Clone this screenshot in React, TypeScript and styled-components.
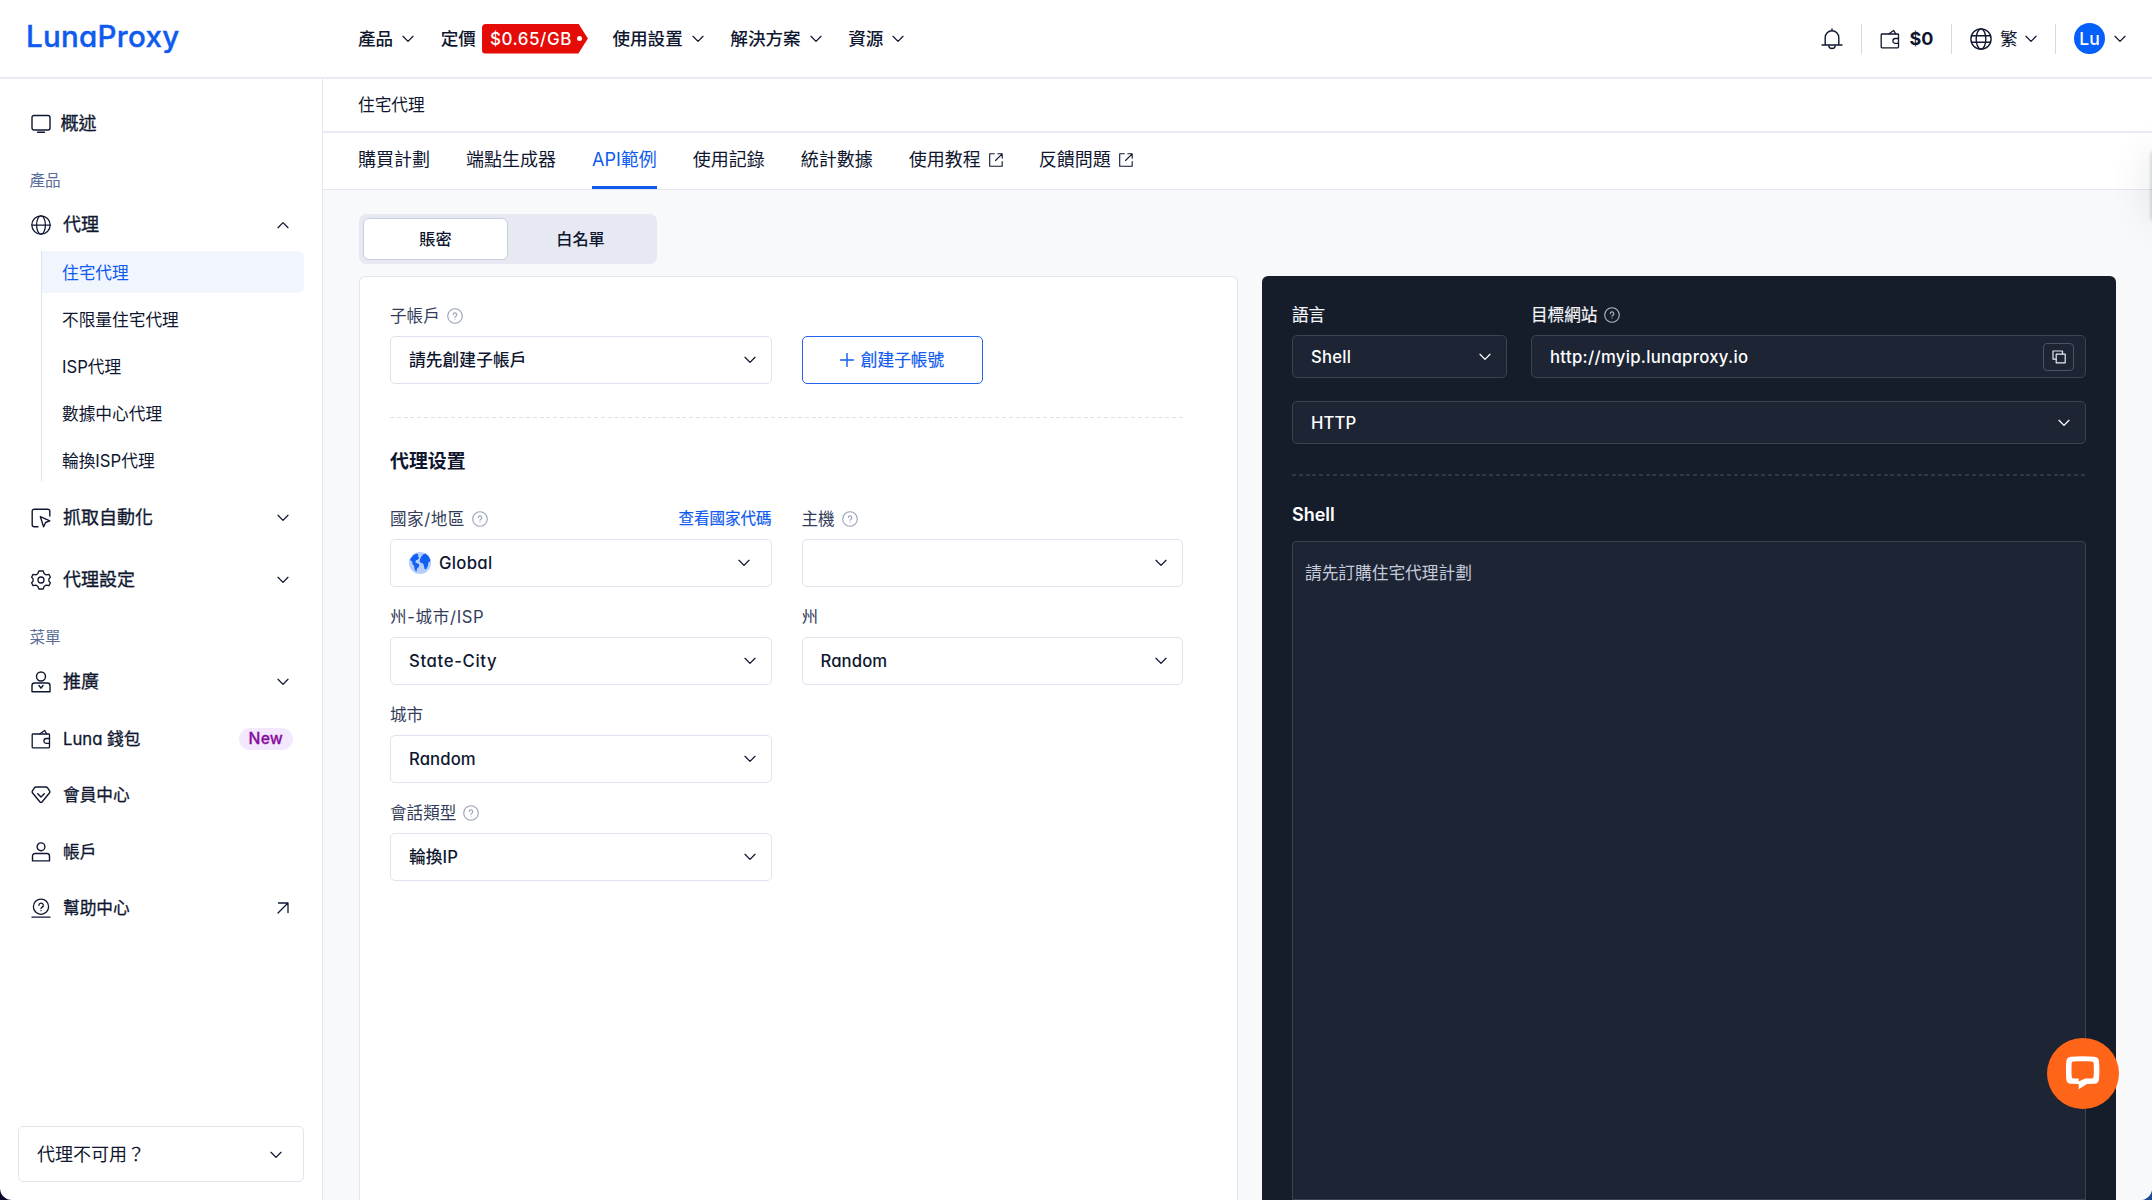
import { ReactNode } from "react";
import styled, { createGlobalStyle, css } from "styled-components";

const GlobalStyle = createGlobalStyle`
  * {
    box-sizing: border-box;
  }

  body {
    margin: 0;
    background: linear-gradient(90deg, #0a0a28 0%, #0a0a28 50%, #1c4a94 50%, #1c4a94 100%);
    color: #0f1730;
    font-family: Inter, "Noto Sans CJK TC", sans-serif;
    font-feature-settings: "cv11";
    font-size: 16.7px;
    line-height: 24px;
    overflow: hidden;
  }

  svg {
    display: block;
    flex: none;
  }
`;

const blue = "#0f5bf0";
const line = "#e9ebf3";

/* Icons */

interface IconProps {
  w?: number;
  h?: number;
  box: string;
  stroke?: number;
  children: ReactNode;
}

const Icon = ({ w = 20, h, box, stroke = 1.4, children }: IconProps) => (
  <svg
    width={w}
    height={h ?? w}
    viewBox={box}
    fill="none"
    stroke="currentColor"
    strokeWidth={stroke}
    strokeLinecap="round"
    strokeLinejoin="round"
  >
    {children}
  </svg>
);

const Chevron = ({ up = false }: { up?: boolean }) => (
  <Icon w={12} h={8} box="0 0 12 8" stroke={1.25}>
    <path d={up ? "M1 6.7 6 1.6l5 5.1" : "M1 1.3 6 6.4l5-5.1"} />
  </Icon>
);

const MonitorIcon = () => (
  <Icon box="0 0 20 20">
    <rect x="1" y="1.5" width="18" height="14.500" rx="2" />
    <path d="M6.5 18.300h7" />
  </Icon>
);

const GlobeIcon = ({ size = 20 }: { size?: number }) => (
  <Icon w={size} box="0 0 20 20" stroke={1.25}>
    <circle cx="10" cy="10" r="9.2" />
    <ellipse cx="10" cy="10" rx="4.4" ry="9.2" />
    <path d={size > 20 ? "M1.4 7h17.2M1.4 13h17.2" : "M.8 10h18.4"} />
  </Icon>
);

const CursorIcon = () => (
  <Icon box="0 0 20 20">
    <path d="M18.8 8V3.2A2 2 0 0 0 16.8 1.2H3.2A2 2 0 0 0 1.2 3.2v13.6a2 2 0 0 0 2 2H7" />
    <path d="m9.3 8.6 9.5 4.2-4.2 1.7-2 4.3z" />
  </Icon>
);

const GearIcon = () => (
  <Icon box="0 0 20 20" stroke={1.3}>
    <path d="M7.8 1h4.4l1 2.7 2.1 1.2 2.7-.5 1.4 2.8-1.5 1.8v2l1.5 1.8-1.4 2.8-2.7-.5-2.1 1.2-1 2.7H7.8l-1-2.7-2.1-1.2-2.7.5L.6 12.8 2.1 11V9L.6 7.2 2 4.4l2.7.5 2.1-1.2z" />
    <circle cx="10" cy="10" r="3" />
  </Icon>
);

const PromoteIcon = () => (
  <Icon h={22} box="0 0 20 22">
    <circle cx="10" cy="5.5" r="4.5" />
    <path d="M1 20.7v-6.2a2.5 2.5 0 0 1 2.5-2.5h13a2.5 2.5 0 0 1 2.5 2.5v6.2zM8 14.5l2 2.7 2-2.7" />
  </Icon>
);

const WalletIcon = () => (
  <Icon box="0 0 20 20" stroke={1.3}>
    <rect x="1.2" y="5" width="17.3" height="13.8" rx=".8" />
    <path d="m9 4.8 4.7-3.3 2 3.3M18.5 9.500h-3.200a2.400 2.400 0 0 0 0 4.800h3.200" />
  </Icon>
);

const DiamondIcon = () => (
  <Icon box="0 0 20 20">
    <path d="M5 2h10a2 2 0 0 1 1.6.8l2.1 3.4a1.5 1.5 0 0 1-.1 1.6l-7.800 9.400a1 1 0 0 1-1.600 0L1.400 7.800a1.500 1.500 0 0 1-.1-1.600l2.100-3.400A2 2 0 0 1 5 2zM6.700 8.800l3.300 3.200 3.300-3.200" />
  </Icon>
);

const UserIcon = () => (
  <Icon box="0 0 20 20">
    <circle cx="10" cy="4.8" r="3.9" />
    <path d="M1.5 18.9v-4.900a2.500 2.500 0 0 1 2.500-2.500h12a2.500 2.500 0 0 1 2.500 2.500v4.900z" />
  </Icon>
);

const HelpIcon = () => (
  <Icon box="0 0 20 20" stroke={1.3}>
    <circle cx="10" cy="8.7" r="7.6" />
    <path d="M1 19.200h18M7.900 7.300a2.200 2.200 0 1 1 3.100 2c-.7.400-1 .7-1 1.300M10 12.600v.1" />
  </Icon>
);

const ArrowIcon = () => (
  <Icon w={12} box="0 0 12 12" stroke={1.3}>
    <path d="M1 11 11 1M1.500 1H11v9.500" />
  </Icon>
);

const ExternalIcon = () => (
  <Icon w={14} box="0 0 14 14" stroke={1.1}>
    <path d="M5.3.8H.7v12.500h12.500V8.500M6.500 7.500 13.200.8M8.800.8h4.400v4.400" />
  </Icon>
);

const BellIcon = () => (
  <Icon w={22} box="0 0 22 22">
    <path d="M4.200 16.800V9.500a6.800 6.800 0 0 1 13.600 0v7.300M1 17h20M11 2.500V1M7.800 17.300a3.200 3.200 0 0 0 6.400 0" />
  </Icon>
);

const Question = () => (
  <Icon w={16} box="0 0 16 16" stroke={1.1}>
    <circle cx="8" cy="8" r="7.3" />
    <path d="M6.300 6.600a1.750 1.750 0 1 1 2.500 1.600c-.6.300-.8.600-.8 1.100M8 11v.1" />
  </Icon>
);

const CopyIcon = () => (
  <Icon w={14} box="0 0 14 14" stroke={1.2}>
    <rect x="4.2" y="4.2" width="9" height="8.6" />
    <path d="M3.800 9.200H1V1h9.500v2.900" />
  </Icon>
);

const EarthIcon = () => (
  <svg width="22" height="22" viewBox="0 0 22 22">
    <circle cx="11" cy="11" r="11" fill="#b5cdfc" />
    <path
      d="M1 7.500 4.500 3l3.700-1.400 1.300 1.300-1 1.600 1.800.7-1.300 2.300-2 .7-.8 2 1.800 1 2.400 1.300-.7 2.500-1.700 1.600-.6 3.400-1.700-2.400-.5-3.500-1.700-2-.2-2.300L1.700 8.500zM12 5l2-2.600 2.500-.8 3.300 3 1.600 3.400-.6 1.800-1.600.6-.2 3.400-1.700 3.300-1.600.2-.9-4-1-2-2.400-.5-.8-2.400z"
      fill="#1160f3"
    />
  </svg>
);

const ChatIcon = () => (
  <svg width="34" height="34" viewBox="0 0 34 34">
    <path
      d="M5 .7C12 0 21 0 28.300.7A5 5 0 0 1 33 5.300c.5 6 .5 12 0 17.700a5 5 0 0 1-4.700 4.800l-7.300.3-8.300 5.200v-5.200L5 27.800A5 5 0 0 1 .300 23c-.5-6-.5-12 0-17.700A5 5 0 0 1 5 .7z M7.300 5.500A1.700 1.700 0 0 0 5.700 7c-.3 4.500-.3 9 0 13.800a1.700 1.700 0 0 0 1.600 1.600l5.400.2v2.800l6.300-2.800 7-.2a1.700 1.700 0 0 0 1.600-1.600c.3-4.800.3-9.300 0-13.800a1.700 1.700 0 0 0-1.600-1.500c-6.200-.4-12.500-.4-18.700 0z"
      fill="#fff"
      fillRule="evenodd"
    />
  </svg>
);

/* Frame */

const Page = styled.div`
  position: relative;
  display: flex;
  flex-direction: column;
  width: 2152px;
  height: 1200px;
  overflow: hidden;
  background: #fff;
  border-radius: 0 0 12px 12px;
`;

const Header = styled.header`
  display: flex;
  align-items: center;
  height: 79px;
  padding: 0 26px;
  border-bottom: 2px solid ${line};
`;

const Logo = styled.div`
  width: 332px;
  padding-bottom: 6px;
  color: ${blue};
  font-size: 29.5px;
  font-weight: 500;
  letter-spacing: 0.3px;
  -webkit-text-stroke: 0.4px ${blue};
`;

const Nav = styled.nav`
  display: flex;
  flex: 1;
  gap: 26.5px;
  font-size: 17.6px;
  font-weight: 500;
`;

const NavItem = styled.div<{ $gap?: number }>`
  display: flex;
  align-items: center;
  gap: ${({ $gap }) => $gap ?? 9}px;
`;

const PriceTag = styled.span`
  display: flex;
  align-items: center;
  gap: 5px;
  width: 106px;
  height: 30px;
  padding-left: 8px;
  margin-right: -2px;
  color: #fff;
  background: #e50b07;
  border-radius: 4px;
  clip-path: polygon(0 0, 91% 0, 100% 50%, 91% 100%, 0 100%);
  font-size: 17px;
  letter-spacing: 0.55px;

  &::after {
    content: "";
    width: 5px;
    height: 5px;
    border-radius: 50%;
    background: #fff;
  }
`;

const HeaderTools = styled.div`
  display: flex;
  align-items: center;
`;

const Tool = styled.div<{ $gap?: number }>`
  display: flex;
  align-items: center;
  gap: ${({ $gap }) => $gap ?? 9}px;
  padding: 0 18px;
  height: 30px;
  font-size: 17.6px;

  & + & {
    border-left: 1px solid #d5d9e3;
  }

  &:last-child {
    padding-right: 0;
  }
`;

const Balance = styled.b`
  font-size: 18px;
  font-weight: 700;
`;

const Avatar = styled.span`
  width: 31px;
  height: 31px;
  color: #fff;
  background: #0560fb;
  border-radius: 50%;
  font-size: 17.5px;
  font-weight: 500;
  line-height: 31px;
  text-align: center;
`;

const Body = styled.div`
  display: flex;
  flex: 1;
  min-height: 0;
`;

/* Sidebar */

const Sidebar = styled.aside`
  display: flex;
  flex-direction: column;
  width: 323px;
  padding: 24px 18px 18px 30.5px;
  border-right: 1px solid #e3e6ee;
`;

const Caption = styled.div<{ $top: number }>`
  height: 24px;
  margin: ${({ $top }) => $top}px 0 0 -1px;
  color: #5a6d98;
  font-size: 15.6px;
`;

const MenuItem = styled.div<{ $height: number; $small?: boolean; $gap?: number; $top?: number }>`
  display: flex;
  align-items: center;
  gap: ${({ $gap }) => $gap ?? 12.5}px;
  height: ${({ $height }) => $height}px;
  padding: ${({ $top }) => $top ?? 0}px 15px 0 0;
  font-size: ${({ $small }) => ($small ? 16.7 : 18)}px;
  -webkit-text-stroke: 0.3px currentColor;
`;

const MenuText = styled.span`
  flex: 1;
`;

const NewPill = styled.span`
  padding: 0 10px;
  margin-right: -4px;
  height: 22px;
  line-height: 22px;
  color: #8a0f9e;
  background: #f3e8fd;
  border-radius: 11px;
  font-size: 15.7px;
  font-weight: 500;
  letter-spacing: 0.2px;
`;

const SubMenu = styled.div`
  display: flex;
  flex-direction: column;
  gap: 5px;
  width: 263px;
  margin: 0 0 5px 10.5px;
  border-left: 1px solid #dfe3ec;
`;

const SubItem = styled.div<{ $active?: boolean }>`
  height: 42px;
  padding-left: 20px;
  border-radius: 0 6px 6px 0;
  line-height: 44px;
  ${({ $active }) =>
    $active &&
    css`
      color: ${blue};
      background: #f1f5fe;
    `}
`;

const HelpBox = styled.div`
  display: flex;
  align-items: center;
  justify-content: space-between;
  width: 286px;
  height: 56px;
  margin: auto 0 0 -12.5px;
  padding: 1px 21px 0 18px;
  border: 1px solid #e1e4ed;
  border-radius: 5px;
  font-size: 18px;
`;

/* Content */

const Main = styled.main`
  display: flex;
  flex: 1;
  flex-direction: column;
  min-width: 0;
  background: #f8f9fb;
`;

const Crumb = styled.div`
  height: 54px;
  padding-left: 35px;
  background: #fff;
  border-bottom: 2px solid ${line};
  line-height: 53px;
`;

const Tabs = styled.div`
  display: flex;
  gap: 36px;
  height: 57px;
  padding-left: 35px;
  background: #fff;
  border-bottom: 1px solid #e3e6ee;
  font-size: 18px;
`;

const Tab = styled.div<{ $active?: boolean }>`
  display: flex;
  align-items: center;
  gap: 8px;
  height: 56px;
  padding-top: 1px;
  border-bottom: 3px solid transparent;
  ${({ $active }) =>
    $active &&
    css`
      color: ${blue};
      border-color: ${blue};
    `}
`;

const Segmented = styled.div`
  display: flex;
  width: 298px;
  height: 50px;
  margin: 24px 0 12px 36px;
  padding: 4px;
  background: #e6e9f2;
  border-radius: 7px;
`;

const Segment = styled.div<{ $active?: boolean }>`
  flex: 1;
  border: 1px solid transparent;
  border-radius: 6px;
  font-size: 16.2px;
  font-weight: 500;
  line-height: 40px;
  text-align: center;
  ${({ $active }) =>
    $active &&
    css`
      background: #fff;
      border-color: #c6cee0;
    `}
`;

const Panels = styled.div`
  display: flex;
  flex: 1;
  gap: 24px;
  min-height: 0;
  padding: 0 36px;
`;

const SettingsCard = styled.section`
  width: 879px;
  padding: 27px 54px 0 30px;
  background: #fff;
  border: 1px solid #e3e6ef;
  border-bottom: 0;
  border-radius: 6px 6px 0 0;
`;

const Columns = styled.div<{ $gap?: number }>`
  display: grid;
  grid-template-columns: repeat(2, 1fr);
  gap: ${({ $gap }) => $gap ?? 0}px 30px;
`;

const Field = styled.div`
  display: flex;
  flex-direction: column;
  gap: 8px;
`;

const Label = styled.label<{ $dark?: boolean; $tracking?: number }>`
  display: flex;
  align-items: center;
  gap: 7px;
  height: 24px;
  color: ${({ $dark }) => ($dark ? "#f3f5f9" : "#333d5a")};
  font-size: 16.6px;
  letter-spacing: ${({ $tracking }) => $tracking ?? 0}px;
  ${({ $dark }) => $dark && "-webkit-text-stroke: 0.2px currentColor;"}

  svg {
    color: ${({ $dark }) => ($dark ? "#b4bac6" : "#98a1b6")};
  }
`;

const CodeLink = styled.a`
  margin-left: auto;
  color: ${blue};
  font-size: 15.5px;
  letter-spacing: 0;
  -webkit-text-stroke: 0.2px currentColor;
`;

const SelectBox = styled.div<{ $dark?: boolean; $pull?: number; $tracking?: number }>`
  display: flex;
  align-items: center;
  gap: 8px;
  height: ${({ $dark }) => ($dark ? 43 : 48)}px;
  padding: 0 ${({ $pull }) => $pull ?? 15}px 0 18px;
  color: ${({ $dark }) => ($dark ? "#fff" : "#0f1730")};
  background: ${({ $dark }) => ($dark ? "#1d2534" : "#fff")};
  border: 1px solid ${({ $dark }) => ($dark ? "#3a4352" : "#e0e3ed")};
  border-radius: 5px;
  font-weight: 500;
  letter-spacing: ${({ $tracking }) => $tracking ?? 0.1}px;

  > :last-child {
    margin-left: auto;
  }
`;

const CreateButton = styled.button`
  display: flex;
  align-items: center;
  justify-content: center;
  align-self: end;
  gap: 7px;
  width: 181px;
  height: 48px;
  color: ${blue};
  background: #fff;
  border: 1.5px solid #2464e8;
  border-radius: 5px;
  font: inherit;
  font-feature-settings: inherit;
  -webkit-text-stroke: 0.2px currentColor;
`;

const Divider = styled.hr<{ $dark?: boolean }>`
  width: 100%;
  height: ${({ $dark }) => ($dark ? 2 : 1)}px;
  margin: ${({ $dark }) => ($dark ? 30 : 33)}px 0 0;
  border: 0;
  background: repeating-linear-gradient(
    90deg,
    ${({ $dark }) => ($dark ? "#2f3848" : "#dfe2ea")} 0 4px,
    transparent 4px 6.8px
  );
`;

const SectionTitle = styled.h3<{ $top: number; $bottom: number; $size: number }>`
  margin: ${({ $top, $bottom }) => `${$top}px 0 ${$bottom}px`};
  font-size: ${({ $size }) => $size}px;
  font-weight: 600;
  line-height: 26px;
`;

const CodePanel = styled.section`
  display: flex;
  flex: 1;
  flex-direction: column;
  padding: 27px 30px 0;
  color: #fff;
  background: #151d2b;
  border-radius: 6px 6px 0 0;
`;

const TargetRow = styled.div`
  display: grid;
  grid-template-columns: 215px 1fr;
  gap: 24px;
  margin-bottom: 23px;
`;

const CopyButton = styled.span`
  display: flex;
  align-items: center;
  justify-content: center;
  width: 31px;
  height: 28px;
  color: #e8ebf1;
  border: 1px solid #4a5362;
  border-radius: 4px;
`;

const CodeArea = styled.div`
  flex: 1;
  padding: 19px 12px;
  color: #c5cbdb;
  background: #1d2534;
  border: 1px solid #3a4352;
  border-radius: 4px 4px 0 0;
`;

/* Overlays */

const ChatButton = styled.div`
  position: absolute;
  left: 2047px;
  top: 1037.5px;
  display: flex;
  align-items: center;
  justify-content: center;
  width: 71.5px;
  height: 71.5px;
  background: #ff6519;
  border-radius: 50%;
`;

const EdgeDrawer = styled.div`
  position: absolute;
  right: -20px;
  top: 152px;
  width: 20px;
  height: 68px;
  box-shadow: 0 0 40px rgba(20, 25, 40, 0.14), 0 0 4px rgba(20, 25, 40, 0.3);
`;

const subItems = ["住宅代理", "不限量住宅代理", "ISP代理", "數據中心代理", "輪換ISP代理"];

const tabs = [
  { text: "購買計劃" },
  { text: "端點生成器" },
  { text: "API範例", active: true },
  { text: "使用記錄" },
  { text: "統計數據" },
  { text: "使用教程", external: true },
  { text: "反饋問題", external: true },
];

interface SelectFieldProps {
  label: string;
  value?: ReactNode;
  help?: boolean;
  link?: string;
  pull?: number;
  tracking?: number;
}

const SelectField = ({ label, value, help, link, pull, tracking }: SelectFieldProps) => (
  <Field>
    <Label $tracking={tracking}>
      {label}
      {help && <Question />}
      {link && <CodeLink>{link}</CodeLink>}
    </Label>
    <SelectBox $pull={pull} $tracking={link ? 0.3 : tracking}>
      {value}
      <Chevron />
    </SelectBox>
  </Field>
);

const TopBar = () => (
  <Header>
    <Logo>LunaProxy</Logo>
    <Nav>
      <NavItem>
        產品 <Chevron />
      </NavItem>
      <NavItem $gap={6}>
        定價 <PriceTag>$0.65/GB</PriceTag>
      </NavItem>
      <NavItem>
        使用設置 <Chevron />
      </NavItem>
      <NavItem>
        解決方案 <Chevron />
      </NavItem>
      <NavItem>
        資源 <Chevron />
      </NavItem>
    </Nav>
    <HeaderTools>
      <Tool>
        <BellIcon />
      </Tool>
      <Tool>
        <WalletIcon />
        <Balance>$0</Balance>
      </Tool>
      <Tool $gap={7.5}>
        <GlobeIcon size={22} />
        繁
        <Chevron />
      </Tool>
      <Tool>
        <Avatar>Lu</Avatar>
        <Chevron />
      </Tool>
    </HeaderTools>
  </Header>
);

const SideMenu = () => (
  <Sidebar>
    <MenuItem $height={42} $gap={10}>
      <MonitorIcon />
      <MenuText>概述</MenuText>
    </MenuItem>
    <Caption $top={24}>產品</Caption>
    <MenuItem $height={58} $top={6}>
      <GlobeIcon />
      <MenuText>代理</MenuText>
      <Chevron up />
    </MenuItem>
    <SubMenu>
      {subItems.map((text, i) => (
        <SubItem key={text} $active={i === 0}>
          {text}
        </SubItem>
      ))}
    </SubMenu>
    <MenuItem $height={63}>
      <CursorIcon />
      <MenuText>抓取自動化</MenuText>
      <Chevron />
    </MenuItem>
    <MenuItem $height={62}>
      <GearIcon />
      <MenuText>代理設定</MenuText>
      <Chevron />
    </MenuItem>
    <Caption $top={15}>菜單</Caption>
    <MenuItem $height={64}>
      <PromoteIcon />
      <MenuText>推廣</MenuText>
      <Chevron />
    </MenuItem>
    <MenuItem $height={49} $small>
      <WalletIcon />
      <MenuText>Luna 錢包</MenuText>
      <NewPill>New</NewPill>
    </MenuItem>
    <MenuItem $height={63} $small>
      <DiamondIcon />
      <MenuText>會員中心</MenuText>
    </MenuItem>
    <MenuItem $height={51} $small>
      <UserIcon />
      <MenuText>帳戶</MenuText>
    </MenuItem>
    <MenuItem $height={61} $small>
      <HelpIcon />
      <MenuText>幫助中心</MenuText>
      <ArrowIcon />
    </MenuItem>
    <HelpBox>
      代理不可用？
      <Chevron />
    </HelpBox>
  </Sidebar>
);

const ProxySettings = () => (
  <SettingsCard>
    <Columns>
      <SelectField label="子帳戶" value="請先創建子帳戶" help />
      <CreateButton>
        <Icon w={14} box="0 0 14 14">
          <path d="M7 .5v13M.5 7h13" />
        </Icon>
        創建子帳號
      </CreateButton>
    </Columns>
    <Divider />
    <SectionTitle $top={31} $bottom={32} $size={18.9}>
      代理设置
    </SectionTitle>
    <Columns $gap={18}>
      <SelectField
        label="國家/地區"
        help
        link="查看國家代碼"
        pull={21}
        tracking={0.5}
        value={
          <>
            <EarthIcon />
            Global
          </>
        }
      />
      <SelectField label="主機" help />
      <SelectField label="州-城市/ISP" value="State-City" tracking={0.65} />
      <SelectField label="州" value="Random" />
      <SelectField label="城市" value="Random" />
      <span />
      <SelectField label="會話類型" value="輪換IP" help />
    </Columns>
  </SettingsCard>
);

const CodeExample = () => (
  <CodePanel>
    <TargetRow>
      <Field>
        <Label $dark>語言</Label>
        <SelectBox $dark $tracking={0.2}>
          Shell
          <Chevron />
        </SelectBox>
      </Field>
      <Field>
        <Label $dark>
          目標網站
          <Question />
        </Label>
        <SelectBox $dark $pull={11} $tracking={0.32}>
          http://myip.lunaproxy.io
          <CopyButton>
            <CopyIcon />
          </CopyButton>
        </SelectBox>
      </Field>
    </TargetRow>
    <SelectBox $dark>
      HTTP
      <Chevron />
    </SelectBox>
    <Divider $dark />
    <SectionTitle $top={26} $bottom={13} $size={18}>
      Shell
    </SectionTitle>
    <CodeArea>請先訂購住宅代理計劃</CodeArea>
  </CodePanel>
);

const App = () => (
  <>
    <GlobalStyle />
    <Page lang="zh-Hant">
      <TopBar />
      <Body>
        <SideMenu />
        <Main>
          <Crumb>住宅代理</Crumb>
          <Tabs>
            {tabs.map((tab) => (
              <Tab key={tab.text} $active={tab.active}>
                {tab.text}
                {tab.external && <ExternalIcon />}
              </Tab>
            ))}
          </Tabs>
          <Segmented>
            <Segment $active>賬密</Segment>
            <Segment>白名單</Segment>
          </Segmented>
          <Panels>
            <ProxySettings />
            <CodeExample />
          </Panels>
        </Main>
      </Body>
      <EdgeDrawer />
      <ChatButton>
        <ChatIcon />
      </ChatButton>
    </Page>
  </>
);

export default App;
